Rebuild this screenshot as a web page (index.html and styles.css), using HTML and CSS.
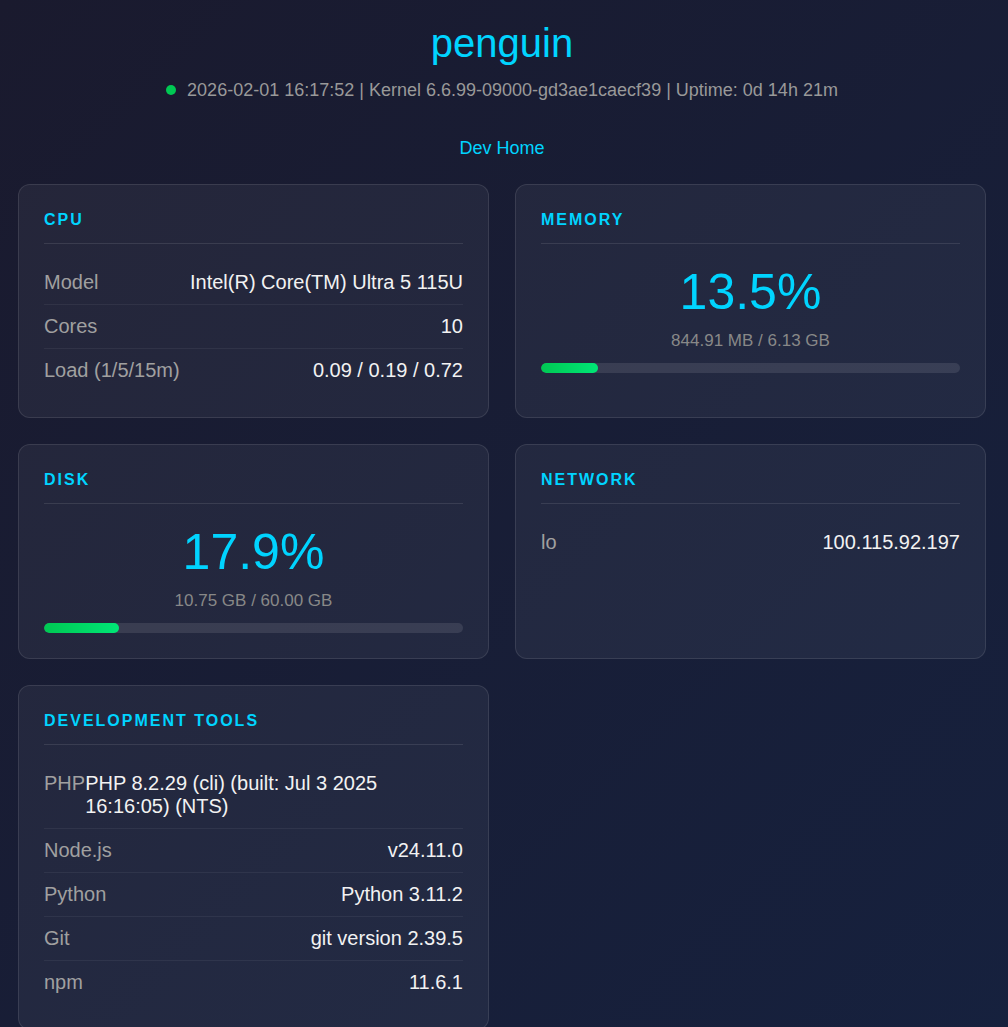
FILE: index.html
```html
<!DOCTYPE html>
<html lang="en">
<head>
<meta charset="utf-8">
<title>penguin</title>
<link rel="stylesheet" href="styles.css">
</head>
<body>
<header class="header">
  <h1 class="host">penguin</h1>
  <div class="meta"><span class="dot"></span>2026-02-01 16:17:52 | Kernel 6.6.99-09000-gd3ae1caecf39 | Uptime: 0d 14h 21m</div>
  <nav class="nav"><a href="#" class="nav-link">Dev Home</a></nav>
</header>
<main class="grid">
  <section class="card">
    <h2 class="card-title">CPU</h2>
    <div class="row"><span class="label">Model</span><span class="value">Intel(R) Core(TM) Ultra 5 115U</span></div>
    <div class="row"><span class="label">Cores</span><span class="value">10</span></div>
    <div class="row"><span class="label">Load (1/5/15m)</span><span class="value">0.09 / 0.19 / 0.72</span></div>
  </section>
  <section class="card">
    <h2 class="card-title">Memory</h2>
    <div class="big">13.5%</div>
    <div class="sub">844.91 MB / 6.13 GB</div>
    <div class="bar"><div class="fill" style="width:13.5%"></div></div>
  </section>
  <section class="card">
    <h2 class="card-title">Disk</h2>
    <div class="big">17.9%</div>
    <div class="sub">10.75 GB / 60.00 GB</div>
    <div class="bar"><div class="fill" style="width:17.9%"></div></div>
  </section>
  <section class="card">
    <h2 class="card-title">Network</h2>
    <div class="row"><span class="label">lo</span><span class="value">100.115.92.197</span></div>
  </section>
  <section class="card">
    <h2 class="card-title">Development Tools</h2>
    <div class="row"><span class="label">PHP</span><span class="value">PHP 8.2.29 (cli) (built: Jul 3 2025 16:16:05) (NTS)</span></div>
    <div class="row"><span class="label">Node.js</span><span class="value">v24.11.0</span></div>
    <div class="row"><span class="label">Python</span><span class="value">Python 3.11.2</span></div>
    <div class="row"><span class="label">Git</span><span class="value">git version 2.39.5</span></div>
    <div class="row"><span class="label">npm</span><span class="value">11.6.1</span></div>
  </section>
</main>
</body>
</html>
```

FILE: styles.css
```css
* { box-sizing: border-box; }
html { background: #1a1a2e; }
body {
  margin: 0;
  padding: 20px 22px 20px 18px;
  min-height: 100vh;
  font-family: "Liberation Sans", Arial, sans-serif;
  color: #e8e8e8;
  background: linear-gradient(135deg, #1a1a2e 0%, #16213e 100%);
}
.header { text-align: center; }
.host {
  margin: 0;
  font-size: 40px;
  font-weight: normal;
  line-height: 46px;
  color: #00d4ff;
}
.meta {
  margin-top: 14px;
  font-size: 18px;
  line-height: 21px;
  color: #999;
}
.dot {
  display: inline-block;
  width: 10px;
  height: 10px;
  border-radius: 50%;
  background: #00c853;
  margin-right: 11px;
  vertical-align: 1px;
}
.nav { margin-top: 37px; line-height: 21px; }
.nav-link {
  font-size: 18px;
  line-height: 21px;
  color: #00d4ff;
  text-decoration: none;
}
.grid {
  margin-top: 25px;
  display: grid;
  grid-template-columns: 1fr 1fr;
  gap: 26px;
  align-items: stretch;
}
.card {
  background: rgba(255,255,255,0.05);
  border: 1px solid rgba(255,255,255,0.1);
  border-radius: 12px;
  padding: 25px;
}
.card-title {
  margin: 0 0 17px;
  padding-bottom: 14px;
  border-bottom: 1px solid rgba(255,255,255,0.1);
  font-size: 16px;
  line-height: 19px;
  font-weight: bold;
  text-transform: uppercase;
  letter-spacing: 2px;
  color: #00d4ff;
}
.row {
  display: flex;
  justify-content: space-between;
  padding: 10px 0;
  font-size: 20px;
  line-height: 23px;
  border-bottom: 1px solid rgba(255,255,255,0.06);
}
.row:last-child { border-bottom: none; }
.label { color: #a0a0a0; }
.value { color: #f2f2f2; }
.big {
  margin: 20px 0 11px;
  text-align: center;
  font-size: 50px;
  line-height: 56px;
  color: #00d4ff;
}
.sub {
  text-align: center;
  font-size: 17px;
  line-height: 20px;
  color: #888;
}
.bar {
  margin-top: 12px;
  height: 10px;
  border-radius: 5px;
  background: rgba(255,255,255,0.1);
  overflow: hidden;
}
.fill {
  height: 100%;
  border-radius: 5px;
  background: linear-gradient(90deg, #00c853, #00e676);
}
```
